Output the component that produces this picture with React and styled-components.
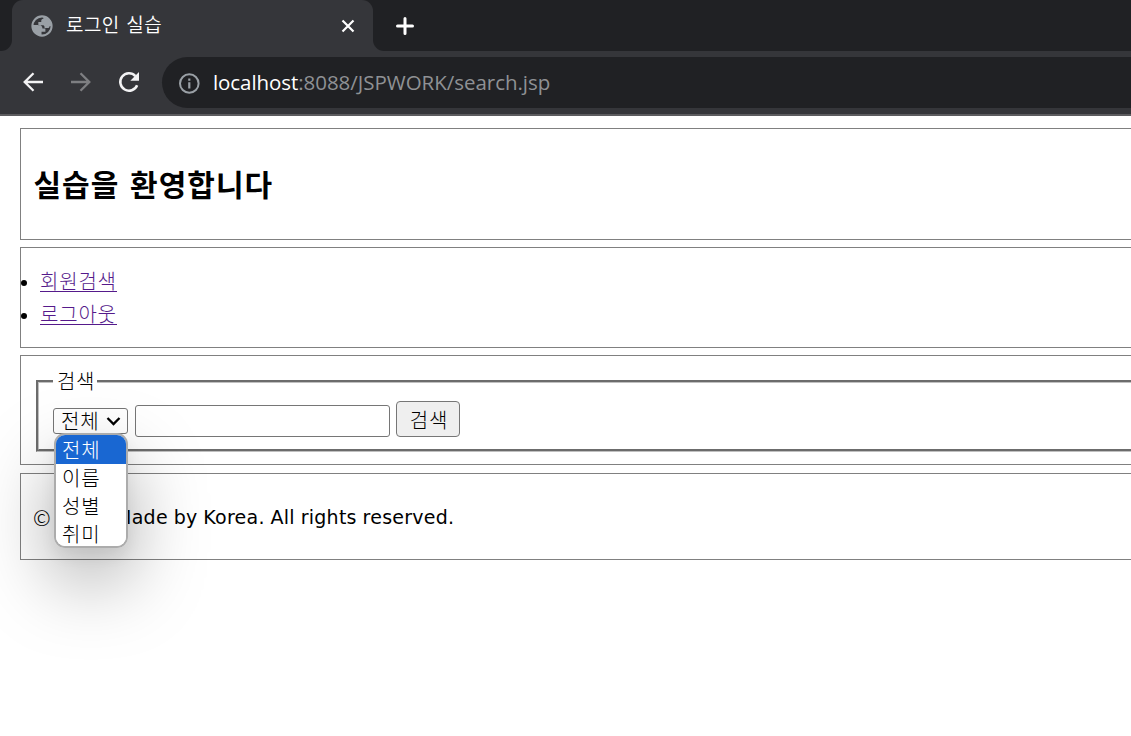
import React from "react";
import styled, { createGlobalStyle } from "styled-components";

const GlobalStyle = createGlobalStyle`
  * { box-sizing: border-box; }
  body {
    margin: 0;
    background: #fff;
    color: #000;
    overflow: hidden;
    font-family: "DejaVu Sans", "Noto Sans CJK KR", sans-serif;
    font-size: 20px;
  }
`;

const korean = `
  font-family: "Noto Sans CJK KR Light", "Noto Sans CJK KR", sans-serif;
  font-weight: 300;
`;

const Browser = styled.div`
  display: flex;
  flex-direction: column;
  height: 736px;
  overflow: hidden;
`;

const TabStrip = styled.div`
  display: flex;
  height: 51px;
  background: #35363a;
`;

const StripEdge = styled.div`
  width: 12px;
  background: #202124;
  border-bottom-right-radius: 11px;
`;

const TabBack = styled.div`
  width: 361px;
  background: #202124;
  display: flex;
`;

const Tab = styled.div`
  flex: 1;
  display: flex;
  align-items: center;
  padding: 0 17px 0 19px;
  background: #35363a;
  border-radius: 11px 11px 0 0;
`;

const TabTitle = styled.span`
  font-family: "Noto Sans CJK KR DemiLight", "Noto Sans CJK KR", sans-serif;
  font-weight: 350;
  flex: 1;
  margin-left: 13px;
  padding-bottom: 3px;
  font-size: 19px;
  line-height: 26px;
  letter-spacing: 0.4px;
  word-spacing: 2px;
  color: #fff;
`;

const StripRest = styled.div`
  flex: 1;
  display: flex;
  align-items: center;
  padding-left: 22px;
  background: #202124;
  border-bottom-left-radius: 11px;
`;

const Toolbar = styled.div`
  display: flex;
  align-items: center;
  flex: none;
  height: 65px;
  padding: 0 0 0 21px;
  background: #35363a;
  border-bottom: 2px solid #5c5c5f;
`;

const NavIcons = styled.div`
  display: flex;
  gap: 24px;
  width: 141px;
  padding-bottom: 1px;
`;

const AddressBar = styled.div`
  display: flex;
  align-items: center;
  flex: 1;
  height: 51px;
  padding-left: 16px;
  background: #202124;
  border-radius: 26px 0 0 26px;
`;

const Url = styled.span`
  margin-left: 13px;
  padding-bottom: 2px;
  font-family: "Open Sans", "Noto Sans", sans-serif;
  font-size: 20.5px;
  line-height: 28px;
  letter-spacing: -0.03px;
  color: #8f9194;
  white-space: nowrap;
`;

const Host = styled.span`
  color: #fff;
  letter-spacing: -0.08px;
`;

const Page = styled.main`
  flex: 1;
  padding: 12px 0 0 20px;
`;

const Box = styled.section`
  height: ${(p) => p.$height}px;
  margin-bottom: ${(p) => p.$gap || 7}px;
  margin-right: -20px;
  border: 1px solid #808080;
`;

const Heading = styled.h1`
  margin: 32px 0 0 12.5px;
  font-family: "Noto Sans CJK KR", sans-serif;
  font-size: 30px;
  font-weight: 700;
  line-height: 44px;
  letter-spacing: 1px;
  word-spacing: 3px;
`;

const Menu = styled.ul`
  margin: 17px 0 0;
  padding: 0;
  list-style: none;
`;

const MenuItem = styled.li`
  display: flex;
  align-items: center;
  height: 33px;

  &::before {
    content: "";
    width: 6px;
    height: 6px;
    margin: 2px 13px 0 0;
    border-radius: 50%;
    background: #000;
  }
`;

const Link = styled.a`
  ${korean}
  height: 22px;
  margin-bottom: 2px;
  font-size: 20px;
  line-height: 22px;
  letter-spacing: 0.8px;
  color: #551a8b;
  border-bottom: 1px solid #551a8b;
`;

const Fieldset = styled.fieldset`
  height: 84px;
  margin: 12px 0 0 15px;
  padding: 7px 14px 12px;
  border: 3px groove #c0c0c0;
`;

const Legend = styled.legend`
  ${korean}
  height: 26px;
  padding: 0 2px 0 4px;
  font-size: 20px;
  line-height: 25px;
  letter-spacing: 0.5px;
`;

const Controls = styled.div`
  display: flex;
  align-items: flex-end;
`;

const SelectWrap = styled.div`
  position: relative;
  width: 75px;
  height: 26px;
  margin: 0 7px 3px 0;
`;

const SelectBox = styled.div`
  ${korean}
  display: flex;
  align-items: center;
  justify-content: space-between;
  height: 26px;
  padding: 0 6px 1px 7px;
  border: 1px solid #767676;
  border-radius: 3px;
  font-size: 20px;
  line-height: 22px;
  letter-spacing: 0.8px;
`;

const Options = styled.div`
  position: absolute;
  z-index: 1;
  top: 25px;
  left: 1px;
  width: 74px;
  height: 115px;
  overflow: hidden;
  border: 2px solid #acacac;
  border-radius: 11px;
  background: #fff;
`;

const OptionsShadow = styled.div`
  position: absolute;
  top: 25px;
  left: 1px;
  width: 74px;
  height: 115px;
  border-radius: 11px;
  box-shadow: 0 32px 76px rgba(0, 0, 0, 0.34), 0 8px 16px rgba(0, 0, 0, 0.06);
`;

const Option = styled.div`
  ${korean}
  height: ${(p) => (p.$selected ? 29 : 28)}px;
  padding-left: 6px;
  font-size: 20px;
  line-height: ${(p) => (p.$selected ? 30 : 28)}px;
  letter-spacing: 0.8px;
  color: ${(p) => (p.$selected ? "#fff" : "#000")};
  background: ${(p) => (p.$selected ? "#1967d2" : "#fff")};
`;

const TextInput = styled.input`
  width: 255px;
  height: 32px;
  margin: 0 6px 0 0;
  padding: 0 4px;
  border: 1px solid #767676;
  border-radius: 3px;
  background: #fff;
`;

const Button = styled.button`
  ${korean}
  width: 64px;
  height: 36px;
  padding: 0 0 0 2px;
  border: 1px solid #767676;
  border-radius: 4px;
  background: #efefef;
  color: #000;
  font-size: 20px;
  line-height: 33px;
  letter-spacing: 0.8px;
`;

const Copyright = styled.p`
  display: flex;
  margin: 29px 0 0 12px;
  font-size: 19px;
  line-height: 28px;
  white-space: nowrap;
`;

const Symbol = styled.span`
  ${korean}
  width: 82px;
  font-size: 21.5px;
`;

const Notice = styled.span`
  letter-spacing: 0.26px;
  word-spacing: -0.5px;
`;

const Globe = () => (
  <svg width="22" height="22" viewBox="0 0 24 24">
    <circle cx="12" cy="12" r="10.500" fill="none" stroke="#9aa0a6" strokeWidth="2.200" />
    <path
      fill="#9aa0a6"
      d="M2 11h6.500c2.500 0 4 1.300 4 3.800h3.200v3.400H11.500V22C6 22.500 1.500 18 2 11ZM13.500 2v2.200c-1.700.2-2.300 1-2.300 2.200v1.200H8v3.600h5.200c1.200 0 1.600 1.200 1.600 3h3.500c1.200 0 1.900-.9 1.900-2H22C23 7 19 2 13.500 2Z"
    />
  </svg>
);

const Arrow = ({ color, forward }) => (
  <svg width="24" height="24" viewBox="0 0 24 24" fill="none" stroke={color} strokeWidth="2.3">
    <path d={forward ? "M2 12h18M11.500 3.200l8.800 8.800-8.800 8.800" : "M22 12H4M12.500 3.200L3.700 12l8.800 8.800"} />
  </svg>
);

const Reload = () => (
  <svg width="24" height="24" viewBox="0 0 24 24">
    <path d="M20.100 15.200a8.700 8.700 0 1 1-1.700-9.100" fill="none" stroke="#f3f3f4" strokeWidth="2.5" />
    <path d="M22 2v8.700h-8.700Z" fill="#f3f3f4" />
  </svg>
);

const Info = () => (
  <svg width="22" height="22" viewBox="0 0 22 22">
    <circle cx="11.300" cy="11.500" r="9.300" fill="none" stroke="#9aa0a6" strokeWidth="2" />
    <path d="M10.200 6.500h2.200v2.200h-2.200ZM10.200 10.300h2.200v6.200h-2.200Z" fill="#9aa0a6" />
  </svg>
);

export default function App() {
  return (
    <Browser>
      <GlobalStyle />
      <TabStrip>
        <StripEdge />
        <TabBack>
          <Tab>
            <Globe />
            <TabTitle>로그인 실습</TabTitle>
            <svg width="16" height="16" viewBox="0 0 16 16" stroke="#fff" strokeWidth="2.200">
              <path d="M2.500 2.500l11 11M13.500 2.500l-11 11" />
            </svg>
          </Tab>
        </TabBack>
        <StripRest>
          <svg width="20" height="20" viewBox="0 0 20 20" stroke="#fff" strokeWidth="3" strokeLinecap="round">
            <path d="M2.500 10h15M10 2.500v15" />
          </svg>
        </StripRest>
      </TabStrip>
      <Toolbar>
        <NavIcons>
          <Arrow color="#f3f3f4" />
          <Arrow color="#7e7f82" forward />
          <Reload />
        </NavIcons>
        <AddressBar>
          <Info />
          <Url>
            <Host>localhost</Host>:8088/JSPWORK/search.jsp
          </Url>
        </AddressBar>
      </Toolbar>
      <Page>
        <Box $height={112}>
          <Heading>실습을 환영합니다</Heading>
        </Box>
        <Box $height={101}>
          <Menu>
            <MenuItem><Link>회원검색</Link></MenuItem>
            <MenuItem><Link>로그아웃</Link></MenuItem>
          </Menu>
        </Box>
        <Box $height={110} $gap={8}>
          <Fieldset>
            <Legend>검색</Legend>
            <Controls>
              <SelectWrap>
                <OptionsShadow />
                <SelectBox>
                  전체
                  <svg width="15" height="10" viewBox="0 0 15 10" fill="none" stroke="#000" strokeWidth="2.300">
                    <path d="M1.500 2l6 6 6-6" />
                  </svg>
                </SelectBox>
                <Options>
                  <Option $selected>전체</Option>
                  <Option>이름</Option>
                  <Option>성별</Option>
                  <Option>취미</Option>
                </Options>
              </SelectWrap>
              <TextInput />
              <Button>검색</Button>
            </Controls>
          </Fieldset>
        </Box>
        <Box $height={87}>
          <Copyright>
            <Symbol>©</Symbol>
            <Notice>Made by Korea. All rights reserved.</Notice>
          </Copyright>
        </Box>
      </Page>
    </Browser>
  );
}
